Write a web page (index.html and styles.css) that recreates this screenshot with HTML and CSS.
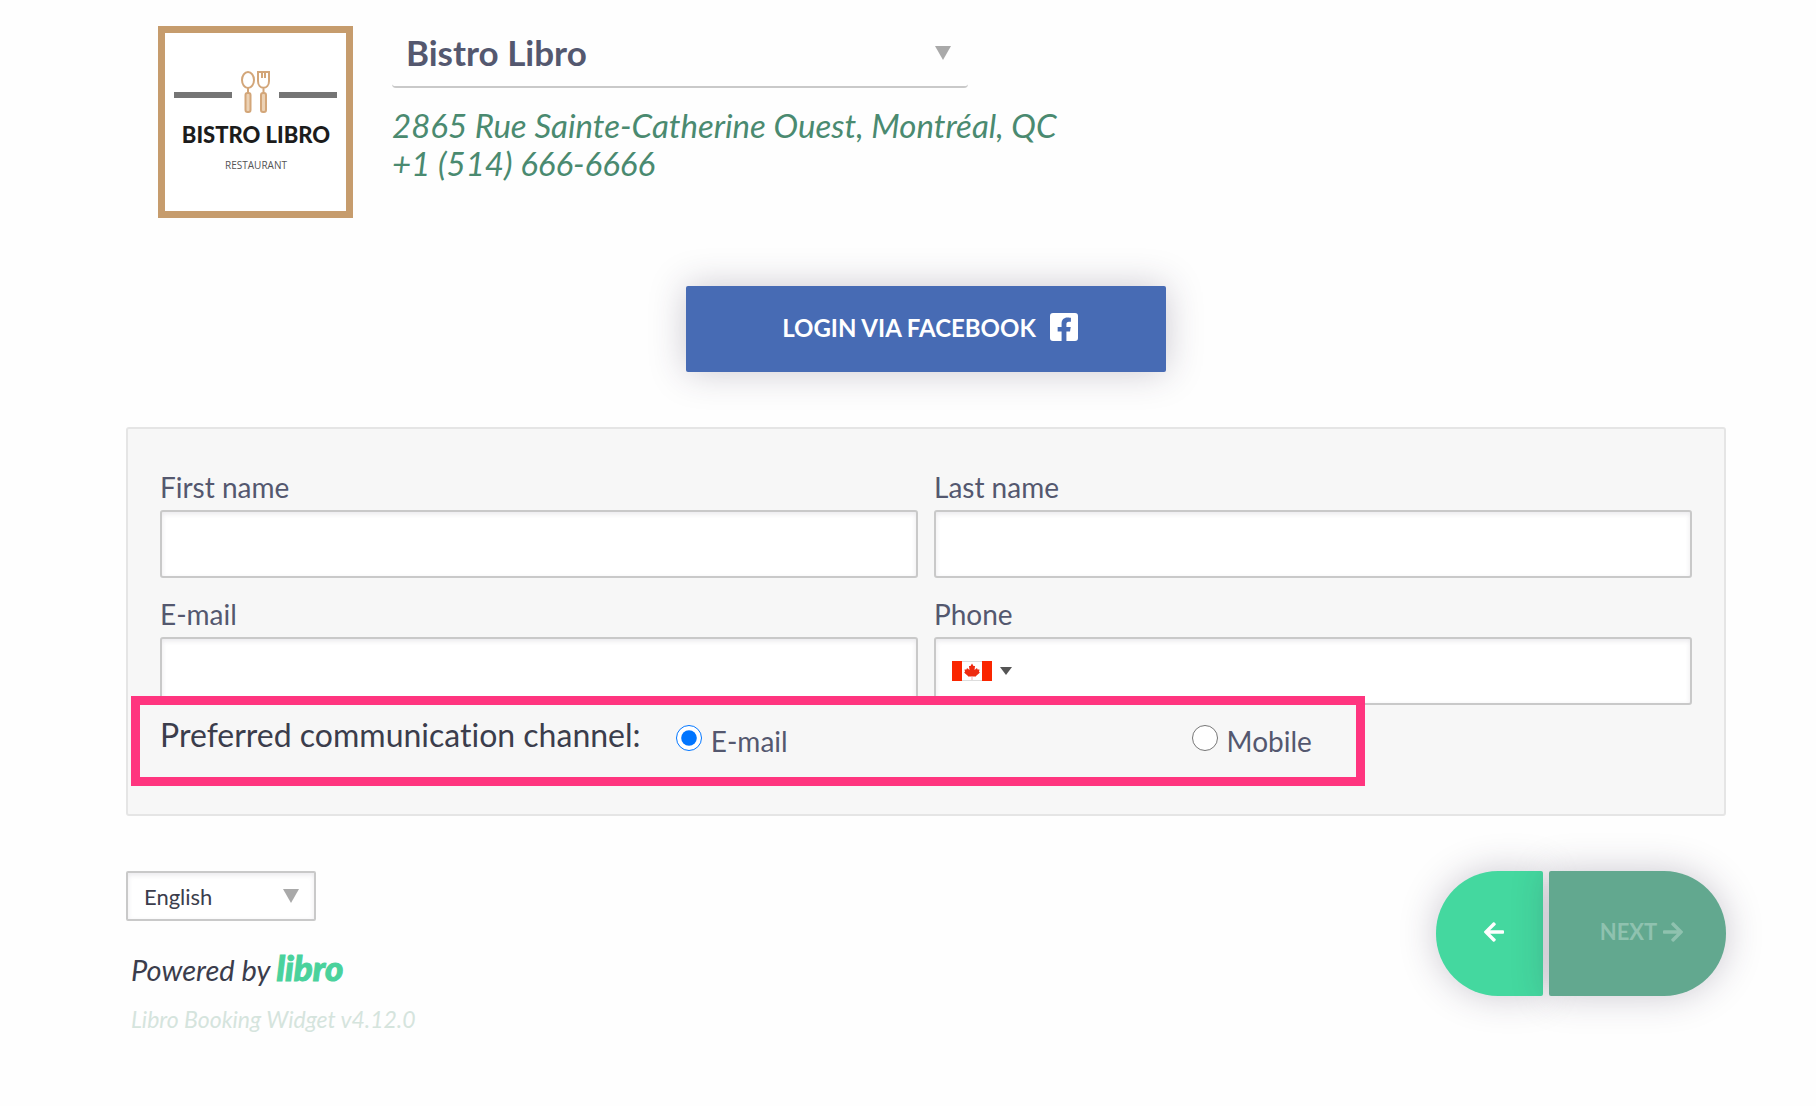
FILE: index.html
```html
<!DOCTYPE html>
<html lang="en">

<head>
    <meta charset="UTF-8">
    <meta name="viewport" content="width=device-width, initial-scale=1.0">
    <title>Bistro Libro</title>
    <link rel="stylesheet" href="styles.css">
</head>

<body>
    <div class="container">
        <header class="header">
            <svg class="logo" viewBox="0 0 195 192" role="img" aria-label="Bistro Libro Restaurant">
                <rect x="3.5" y="3.5" width="188" height="185" fill="#fff" stroke="#c69c6d" stroke-width="7" />
                <path d="M16 69h58M121 69h58" stroke="#757575" stroke-width="6" />
                <g fill="none" stroke="#d3a679" stroke-width="2">
                    <ellipse cx="90" cy="54" rx="6" ry="8" />
                    <path d="M90 62v5" />
                    <rect x="87.500" y="67" width="5" height="19" rx="2" fill="#ecd2b5" />
                    <path d="M100 46v9c0 9 11 9 11 0v-9zM104 46v6M107 46v6M105.500 62v5" />
                    <rect x="103" y="67" width="5" height="19" rx="2" fill="#ecd2b5" />
                </g>
                <text class="logo-name" x="98" y="117">BISTRO LIBRO</text>
                <text class="logo-sub" x="98" y="143">RESTAURANT</text>
            </svg>
            <div class="store">
                <div class="select-wrap store-select">
                    <select aria-label="Restaurant">
                        <option>Bistro Libro</option>
                    </select>
                </div>
                <address>
                    2865 Rue Sainte-Catherine Ouest, Montréal, QC<br>
                    +1 (514) 666-6666
                </address>
            </div>
        </header>

        <button type="button" class="btn facebook">
            LOGIN VIA FACEBOOK
            <svg class="fb-icon" viewBox="0 32 448 448" aria-hidden="true">
                <path fill="currentColor" d="M400 32H48A48 48 0 0 0 0 80v352a48 48 0 0 0 48 48h137.250V327.690h-63V256h63v-54.640c0-62.150 37-96.480 93.670-96.480 27.140 0 55.520 4.840 55.520 4.840v61h-31.270c-30.810 0-40.420 19.120-40.420 38.730V256h68.780l-11 71.690h-57.780V480H400a48 48 0 0 0 48-48V80a48 48 0 0 0-48-48z" />
            </svg>
        </button>

        <form id="guestForm">
            <div class="card">
                <div class="fields">
                    <div class="field">
                        <label for="firstName">First name</label>
                        <input type="text" id="firstName" class="box">
                    </div>
                    <div class="field">
                        <label for="lastName">Last name</label>
                        <input type="text" id="lastName" class="box">
                    </div>
                    <div class="field">
                        <label for="email">E-mail</label>
                        <input type="email" id="email" class="box">
                    </div>
                    <div class="field">
                        <label for="phone">Phone</label>
                        <div class="box phone">
                            <button type="button" class="country" aria-label="Canada">
                                <svg class="flag" viewBox="0 0 40 20" aria-hidden="true">
                                    <path fill="#fff" d="M0 0h40v20H0z" />
                                    <path stroke="#ddd" d="M10 .5h20M10 19.500h20" />
                                    <path fill="#fa2600" d="M0 0h10v20H0zM30 0h10v20H30z" />
                                    <path fill="#ee2a10" d="M20 2.500l1.500 2.500h1.500l-.5 4 2.500-2 .5 1.500h2l-.5 2.500 1 .5-4 3.500v.5h-8v-.5l-4-3.500 1-.5-.5-2.500h2l.5-1.500 2.500 2-.5-4h1.500z" />
                                    <path stroke="#f5a9b4" d="M20 15.500v3.500" />
                                </svg>
                                <span class="caret"></span>
                            </button>
                            <input type="tel" id="phone">
                        </div>
                    </div>
                </div>

                <div class="channel" role="radiogroup" aria-labelledby="channelTitle">
                    <span class="channel-title" id="channelTitle">Preferred communication channel:</span>
                    <div class="choice">
                        <input type="radio" name="channel" id="byEmail" checked>
                        <label for="byEmail">E-mail</label>
                    </div>
                    <div class="choice">
                        <input type="radio" name="channel" id="byMobile">
                        <label for="byMobile">Mobile</label>
                    </div>
                </div>
            </div>

            <div class="footer">
                <div class="info">
                    <div class="select-wrap language">
                        <select aria-label="Language">
                            <option>English</option>
                        </select>
                    </div>
                    <p class="powered">Powered by <a href="#">libro</a></p>
                    <p class="version">Libro Booking Widget v4.12.0</p>
                </div>
                <div class="nav">
                    <button type="button" class="btn back" aria-label="Back">
                        <svg class="arrow" viewBox="0 32 448 448" aria-hidden="true">
                            <path fill="currentColor" d="M257.500 445.100l-22.200 22.200c-9.400 9.400-24.600 9.400-33.900 0L7 273c-9.400-9.400-9.400-24.600 0-33.900L201.400 44.700c9.400-9.400 24.600-9.400 33.900 0l22.200 22.200c9.500 9.500 9.300 25-.4 34.300L136.600 216H424c13.300 0 24 10.700 24 24v32c0 13.300-10.700 24-24 24H136.600l120.500 114.800c9.800 9.300 10 24.800.4 34.300z" />
                        </svg>
                    </button>
                    <button type="submit" class="btn next" disabled>
                        NEXT
                        <svg class="arrow" viewBox="0 32 448 448" aria-hidden="true">
                            <path fill="currentColor" d="M190.500 66.900l22.200-22.200c9.400-9.400 24.600-9.400 33.900 0L441 239c9.400 9.400 9.400 24.600 0 33.900L246.600 467.300c-9.400 9.400-24.600 9.400-33.900 0l-22.200-22.200c-9.500-9.500-9.300-25 .4-34.300L311.400 296H24c-13.300 0-24-10.700-24-24v-32c0-13.300 10.700-24 24-24h287.400L190.900 101.200c-9.800-9.300-10-24.800-.4-34.300z" />
                        </svg>
                    </button>
                </div>
            </div>
        </form>
    </div>
</body>

</html>
```

FILE: styles.css
```css
* {
    box-sizing: border-box;
}

body {
    margin: 0;
    background-color: #fefefe;
    font-family: Lato, "Open Sans", sans-serif;
    font-variant-ligatures: none;
    color: #3b3d4c;
}

input, select, button {
    font-family: inherit;
    color: inherit;
}

.container {
    padding: 18px 90px 60px 126px;
}

/* restaurant */
.header {
    display: flex;
    align-items: flex-start;
    gap: 39px;
    padding-left: 32px;
}

.logo {
    width: 195px;
    margin-top: 8px;
    flex: none;
}

.logo-name {
    font-size: 22px;
    font-weight: 900;
    text-anchor: middle;
    fill: #1c1c1c;
}

.logo-sub {
    font-family: "Open Sans", sans-serif;
    font-size: 10px;
    text-anchor: middle;
    fill: #555;
}

.select-wrap {
    display: grid;
    align-items: center;
}

.select-wrap select {
    grid-area: 1 / 1;
    appearance: none;
    width: 100%;
    background-color: transparent;
    border: 2px solid #c9c9c9;
    border-radius: 2px;
}

.select-wrap::after {
    content: "";
    grid-area: 1 / 1;
    justify-self: end;
    width: 16px;
    height: 14px;
    margin-right: 17px;
    background-color: #a9a9a9;
    clip-path: polygon(0 0, 100% 0, 50% 100%);
    pointer-events: none;
}

.store-select {
    width: 576px;
    max-width: 100%;
}

.store-select select {
    height: 70px;
    padding: 0 14px;
    border-width: 0 0 2px;
    border-radius: 4px;
    font-size: 35px;
    font-weight: bold;
    color: #54586f;
}

address {
    margin-top: 18px;
    font-size: 33px;
    line-height: 38px;
    color: #4a8a70;
}

/* buttons */
.btn {
    display: flex;
    align-items: center;
    justify-content: center;
    padding: 0 0 4px 8px;
    border: none;
    font-size: 22px;
    font-weight: bold;
    color: white;
    cursor: pointer;
    box-shadow: 0 0 36px rgba(50, 40, 70, 0.25);
}

.facebook {
    width: 480px;
    max-width: 100%;
    height: 86px;
    margin: 68px auto 55px;
    gap: 14px;
    border-radius: 2px;
    background-color: #476bb4;
    font-size: 24px;
}

.fb-icon {
    width: 28px;
}

/* guest form */
.card {
    padding: 40px 32px 28px;
    border: 2px solid #e5e5e5;
    border-radius: 3px;
    background-color: #f7f7f7;
}

.fields {
    display: grid;
    grid-template-columns: 1fr 1fr;
    gap: 18px 16px;
}

.field label, .choice label {
    font-size: 28px;
    line-height: 36px;
    color: #54586f;
}

.field label {
    display: block;
    margin-bottom: 5px;
}

.box {
    display: block;
    width: 100%;
    height: 68px;
    padding: 0 16px;
    border: 2px solid #c9c9c9;
    border-radius: 3px;
    background-color: white;
    box-shadow: inset 0 2px 5px rgba(50, 40, 70, 0.1);
    font-size: 28px;
}

.phone {
    display: flex;
}

.phone input {
    flex: 1;
    min-width: 0;
    border: none;
    background-color: transparent;
    font-size: 28px;
}

.country {
    display: flex;
    align-items: center;
    gap: 8px;
    padding: 0;
    border: none;
    background-color: transparent;
}

.flag {
    width: 40px;
}

.caret {
    width: 12px;
    height: 8px;
    background-color: #555;
    clip-path: polygon(0 0, 100% 0, 50% 100%);
}

/* sits over the bottom edge of the inputs */
.channel {
    position: relative;
    display: grid;
    grid-template-columns: 1fr 1fr 164px;
    width: calc(80% + 8px);
    height: 90px;
    margin: -9px 0 0 -29px;
    padding: 12px 0 0 20px;
    border: 9px solid #ff357f;
    background-color: #f7f7f7;
}

.channel-title {
    font-size: 32px;
    line-height: 36px;
    white-space: nowrap;
}

.choice {
    display: flex;
    align-items: flex-start;
    gap: 9px;
    padding-top: 6px;
}

.choice input {
    width: 26px;
    height: 26px;
    margin: 2px 0 0;
    accent-color: #0075ff;
}

/* footer */
.footer {
    display: flex;
    justify-content: space-between;
    align-items: flex-start;
    margin-top: 55px;
}

.language {
    width: 190px;
}

.language select {
    height: 50px;
    padding: 0 16px;
    background-color: white;
    box-shadow: inset 0 2px 5px rgba(50, 40, 70, 0.1);
    font-size: 22px;
}

.info p {
    margin: 0 0 0 5px;
    font-style: italic;
}

.info .powered {
    margin-top: 26px;
    font-size: 29px;
    line-height: 40px;
}

/* brand name */
.powered a {
    color: #4ad29c;
    font-size: 35px;
    font-weight: 900;
    text-decoration: none;
    -webkit-text-stroke: 1px #4ad29c;
}

.info .version {
    margin-top: 15px;
    font-size: 23px;
    line-height: 28px;
    color: #d5e4dd;
}

.nav {
    display: flex;
    gap: 6px;
}

.nav .btn {
    height: 125px;
    gap: 6px;
}

.arrow {
    width: 20px;
}

.back {
    width: 107px;
    border-radius: 62px 2px 2px 62px;
    background-color: #44d89f;
}

.next {
    width: 177px;
    border-radius: 2px 62px 62px 2px;
    background-color: #62a88f;
}

.nav .next {
    color: #8fc2af;
    cursor: default;
}
```
